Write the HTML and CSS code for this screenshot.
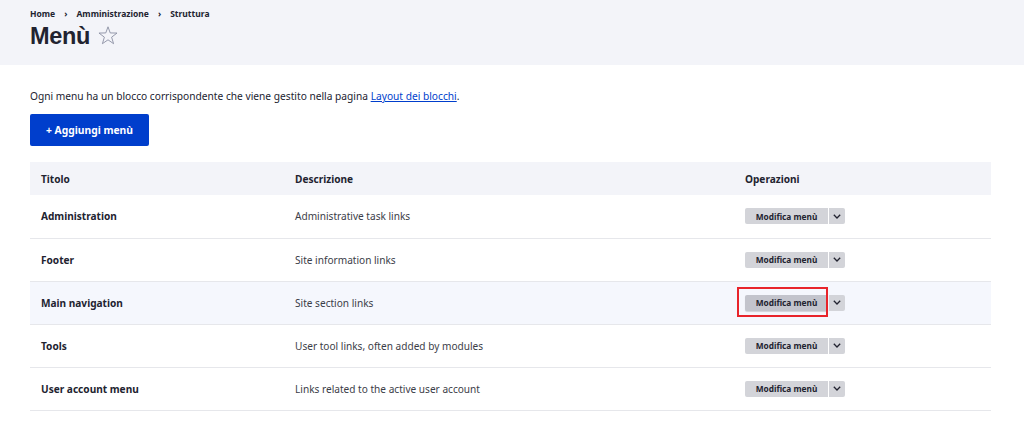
FILE: index.html
```html
<!DOCTYPE html>
<html lang="it">
<head>
<meta charset="utf-8">
<title>Menù</title>
<link rel="stylesheet" href="styles.css">
</head>
<body>
<header class="page-header">
  <nav class="breadcrumb">
    <a href="#">Home</a><span class="sep">›</span><a href="#">Amministrazione</a><span class="sep">›</span><a href="#">Struttura</a>
  </nav>
  <h1 class="title">Menù <svg class="star" width="20" height="19" viewBox="0 0 20 19"><polygon points="10,0.8 12.23,6.93 19.03,7.06 13.61,11.17 15.58,17.69 10,13.8 4.42,17.69 6.39,11.17 0.97,7.06 7.77,6.93" fill="none" stroke="#8a8fa3" stroke-width="0.9" stroke-linejoin="miter"/></svg></h1>
</header>
<main class="content">
  <p class="intro">Ogni menu ha un blocco corrispondente che viene gestito nella pagina <a href="#">Layout dei blocchi</a>.</p>
  <a class="btn-primary" href="#">+ Aggiungi menù</a>
  <table class="menus">
    <thead>
      <tr><th class="c1">Titolo</th><th class="c2">Descrizione</th><th class="c3">Operazioni</th></tr>
    </thead>
    <tbody>
      <tr><td class="name">Administration</td><td>Administrative task links</td><td><div class="ops"><span class="op-main">Modifica menù</span><span class="op-toggle"><svg width="8" height="5" viewBox="0 0 8 5"><path d="M0.8 0.8 L4 4 L7.2 0.8" fill="none" stroke="#222330" stroke-width="1.3"/></svg></span></div></td></tr>
      <tr><td class="name">Footer</td><td>Site information links</td><td><div class="ops"><span class="op-main">Modifica menù</span><span class="op-toggle"><svg width="8" height="5" viewBox="0 0 8 5"><path d="M0.8 0.8 L4 4 L7.2 0.8" fill="none" stroke="#222330" stroke-width="1.3"/></svg></span></div></td></tr>
      <tr class="hover"><td class="name">Main navigation</td><td>Site section links</td><td><div class="ops"><span class="op-main active">Modifica menù</span><span class="op-toggle"><svg width="8" height="5" viewBox="0 0 8 5"><path d="M0.8 0.8 L4 4 L7.2 0.8" fill="none" stroke="#222330" stroke-width="1.3"/></svg></span></div></td></tr>
      <tr><td class="name">Tools</td><td>User tool links, often added by modules</td><td><div class="ops"><span class="op-main">Modifica menù</span><span class="op-toggle"><svg width="8" height="5" viewBox="0 0 8 5"><path d="M0.8 0.8 L4 4 L7.2 0.8" fill="none" stroke="#222330" stroke-width="1.3"/></svg></span></div></td></tr>
      <tr><td class="name">User account menu</td><td>Links related to the active user account</td><td><div class="ops"><span class="op-main">Modifica menù</span><span class="op-toggle"><svg width="8" height="5" viewBox="0 0 8 5"><path d="M0.8 0.8 L4 4 L7.2 0.8" fill="none" stroke="#222330" stroke-width="1.3"/></svg></span></div></td></tr>
    </tbody>
  </table>
</main>
</body>
</html>
```
FILE: styles.css
```css
* { box-sizing: border-box; }
html, body { margin: 0; padding: 0; }
body {
  font-family: "Noto Sans", "Open Sans", sans-serif;
  color: #222330;
  background: #fff;
  font-size: 10.1px;
}
.page-header {
  background: #f3f4f9;
  height: 65px;
  padding: 9px 30px 0;
}
.breadcrumb {
  font-size: 8.5px;
  font-weight: 700;
  line-height: 10px;
  display: flex;
  align-items: center;
}
.breadcrumb a { color: #222330; text-decoration: none; }
.breadcrumb .sep { margin: 0 9px; font-size: 9px; }
.title {
  margin: 4px 0 0;
  font-family: "Liberation Sans", Arial, sans-serif;
  font-size: 23.5px;
  line-height: 26px;
  font-weight: 700;
  letter-spacing: -0.3px;
  display: flex;
  align-items: center;
  gap: 8px;
}
.star { display: block; margin-top: -1px; }
.content {
  padding: 23px 33px 0 30px;
}
.intro {
  margin: 0 0 10px;
  line-height: 16px;
  font-size: 10.2px;
  color: #222330;
}
.intro a { color: #003ecc; }
.btn-primary {
  display: inline-flex;
  align-items: center;
  justify-content: center;
  width: 119px;
  height: 32px;
  background: #003ecc;
  color: #fff;
  font-weight: 700;
  font-size: 10.3px;
  text-decoration: none;
  border-radius: 2px;
}
.menus {
  margin-top: 16px;
  width: 100%;
  border-collapse: collapse;
}
.menus th {
  background: #f3f4f9;
  height: 33px;
  text-align: left;
  font-weight: 700;
  font-size: 10.1px;
  padding: 0 11px;
}
.menus th.c1 { width: 254px; }
.menus th.c2 { width: 450px; }
.menus td {
  height: 43px;
  padding: 0 11px;
  border-bottom: 1px solid #e6e7eb;
  font-size: 10.1px;
  color: #3b3d48;
}
.menus td.name { font-weight: 700; color: #222330; }
.menus tr.hover td { background: #f5f7fd; }
.ops { display: flex; gap: 1px; }
.op-main {
  position: relative;
  display: inline-flex;
  align-items: center;
  justify-content: center;
  width: 83px;
  height: 16px;
  background: #d3d4d9;
  font-size: 8.3px;
  font-weight: 700;
  color: #222330;
  border-radius: 2px 0 0 2px;
}
.op-main.active {
  background: #c3c4cc;
  box-shadow: 0 1px 1px rgba(0,0,0,0.15);
}
.op-main.active::after {
  content: "";
  position: absolute;
  left: -8px;
  top: -8px;
  right: 0;
  bottom: -6px;
  border: 2px solid #e8242b;
}
.op-toggle {
  display: inline-flex;
  align-items: center;
  justify-content: center;
  width: 16px;
  height: 16px;
  background: #d3d4d9;
  border-radius: 0 2px 2px 0;
}
```
